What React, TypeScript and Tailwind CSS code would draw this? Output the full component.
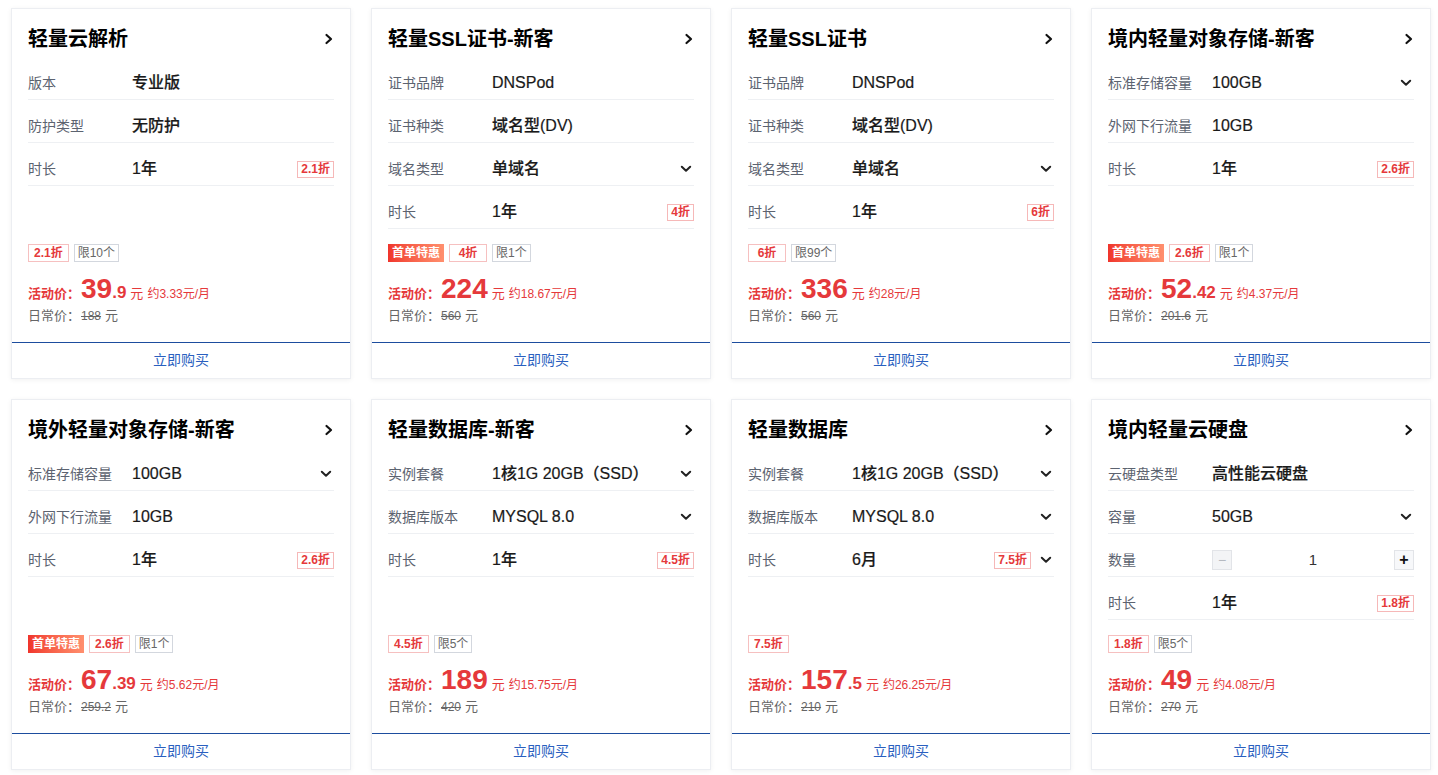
type Row = {
  label: string
  value?: string
  discount?: string
  select?: boolean
  stepper?: boolean
}

type Product = {
  title: string
  rows: Row[]
  firstOrder?: boolean
  tags: string[]
  limit?: string
  price: string
  decimal?: string
  monthly: string
  regular: string
}

const products: Product[] = [
  {
    title: '轻量云解析',
    rows: [
      { label: '版本', value: '专业版' },
      { label: '防护类型', value: '无防护' },
      { label: '时长', value: '1年', discount: '2.1折' },
    ],
    tags: ['2.1折'],
    limit: '限10个',
    price: '39',
    decimal: '.9',
    monthly: '约3.33元/月',
    regular: '188',
  },
  {
    title: '轻量SSL证书-新客',
    rows: [
      { label: '证书品牌', value: 'DNSPod' },
      { label: '证书种类', value: '域名型(DV)' },
      { label: '域名类型', value: '单域名', select: true },
      { label: '时长', value: '1年', discount: '4折' },
    ],
    firstOrder: true,
    tags: ['4折'],
    limit: '限1个',
    price: '224',
    monthly: '约18.67元/月',
    regular: '560',
  },
  {
    title: '轻量SSL证书',
    rows: [
      { label: '证书品牌', value: 'DNSPod' },
      { label: '证书种类', value: '域名型(DV)' },
      { label: '域名类型', value: '单域名', select: true },
      { label: '时长', value: '1年', discount: '6折' },
    ],
    tags: ['6折'],
    limit: '限99个',
    price: '336',
    monthly: '约28元/月',
    regular: '560',
  },
  {
    title: '境内轻量对象存储-新客',
    rows: [
      { label: '标准存储容量', value: '100GB', select: true },
      { label: '外网下行流量', value: '10GB' },
      { label: '时长', value: '1年', discount: '2.6折' },
    ],
    firstOrder: true,
    tags: ['2.6折'],
    limit: '限1个',
    price: '52',
    decimal: '.42',
    monthly: '约4.37元/月',
    regular: '201.6',
  },
  {
    title: '境外轻量对象存储-新客',
    rows: [
      { label: '标准存储容量', value: '100GB', select: true },
      { label: '外网下行流量', value: '10GB' },
      { label: '时长', value: '1年', discount: '2.6折' },
    ],
    firstOrder: true,
    tags: ['2.6折'],
    limit: '限1个',
    price: '67',
    decimal: '.39',
    monthly: '约5.62元/月',
    regular: '259.2',
  },
  {
    title: '轻量数据库-新客',
    rows: [
      { label: '实例套餐', value: '1核1G 20GB（SSD）', select: true },
      { label: '数据库版本', value: 'MYSQL 8.0', select: true },
      { label: '时长', value: '1年', discount: '4.5折' },
    ],
    tags: ['4.5折'],
    limit: '限5个',
    price: '189',
    monthly: '约15.75元/月',
    regular: '420',
  },
  {
    title: '轻量数据库',
    rows: [
      { label: '实例套餐', value: '1核1G 20GB（SSD）', select: true },
      { label: '数据库版本', value: 'MYSQL 8.0', select: true },
      { label: '时长', value: '6月', discount: '7.5折', select: true },
    ],
    tags: ['7.5折'],
    price: '157',
    decimal: '.5',
    monthly: '约26.25元/月',
    regular: '210',
  },
  {
    title: '境内轻量云硬盘',
    rows: [
      { label: '云硬盘类型', value: '高性能云硬盘' },
      { label: '容量', value: '50GB', select: true },
      { label: '数量', stepper: true },
      { label: '时长', value: '1年', discount: '1.8折' },
    ],
    tags: ['1.8折'],
    limit: '限5个',
    price: '49',
    monthly: '约4.08元/月',
    regular: '270',
  },
]

function ArrowRight() {
  return (
    <svg width="10" height="12" viewBox="0 0 10 12" fill="none" className="shrink-0">
      <path d="M2.5 2 L7 6 L2.5 10" stroke="#111" strokeWidth="2.2" strokeLinecap="round" strokeLinejoin="round" />
    </svg>
  )
}

function ArrowDown() {
  return (
    <svg width="12" height="8" viewBox="0 0 12 8" fill="none" className="shrink-0 mr-[2px]">
      <path d="M1.8 1.8 L6 5.8 L10.2 1.8" stroke="#222" strokeWidth="2" strokeLinecap="round" strokeLinejoin="round" />
    </svg>
  )
}

function Stepper() {
  return (
    <div className="flex flex-1 items-center justify-between">
      <span className="flex h-[20px] w-[20px] items-center justify-center border border-[#e2e4e8] bg-[#f3f4f6] text-[14px] leading-none text-[#b5b9c0]">
        −
      </span>
      <span className="text-[15px] text-[#333]">1</span>
      <span className="flex h-[20px] w-[20px] items-center justify-center border border-[#e2e4e8] bg-[#f7f8fa] text-[16px] font-bold leading-none text-[#111]">
        +
      </span>
    </div>
  )
}

function SpecRow({ row }: { row: Row }) {
  return (
    <div className="flex h-[43px] items-center border-b border-[#eef0f3] pt-[15px] pb-[5px]">
      <span className="w-[104px] shrink-0 text-[14px] leading-[22px] text-[#5c6370]">{row.label}</span>
      {row.stepper ? (
        <Stepper />
      ) : (
        <>
          <span className="flex-1 text-[16px] font-medium leading-[22px] text-[#1a1a1a] [-webkit-text-stroke:0.2px_#1a1a1a]">
            {row.value}
          </span>
          {row.discount && (
            <span className="border border-[#f6b8b8] px-[3px] text-[12px] font-bold leading-[15px] text-[#e5393b]">
              {row.discount}
            </span>
          )}
          {row.select && (
            <span className={row.discount ? 'ml-[9px]' : ''}>
              <ArrowDown />
            </span>
          )}
        </>
      )}
    </div>
  )
}

function ProductCard({ product }: { product: Product }) {
  return (
    <div className="flex h-[371px] flex-col border border-[#eceef2] bg-white shadow-[0_1px_5px_rgba(0,0,0,0.06)]">
      <div className="px-4">
        <div className="mt-[17px] mb-[5px] flex h-[26px] items-center justify-between">
          <h2 className="text-[20px] font-bold leading-[26px] text-black">{product.title}</h2>
          <ArrowRight />
        </div>
        {product.rows.map((row) => (
          <SpecRow key={row.label} row={row} />
        ))}
      </div>

      <div className="flex-1" />

      <div className="px-4 pb-[17px]">
        <div className="flex h-[18px] items-center gap-[5px]">
          {product.firstOrder && (
            <span className="flex h-[18px] items-center bg-gradient-to-r from-[#f0342c] to-[#ff8f6e] px-[4px] text-[12px] font-bold text-white">
              首单特惠
            </span>
          )}
          {product.tags.map((tag) => (
            <span
              key={tag}
              className="flex h-[18px] min-w-[38px] items-center justify-center border border-[#f6c0c0] px-[5px] text-[12px] font-bold text-[#e5393b]"
            >
              {tag}
            </span>
          ))}
          {product.limit && (
            <span className="flex h-[18px] items-center border border-[#d3d7de] px-[3px] text-[12px] text-[#666]">
              {product.limit}
            </span>
          )}
        </div>
        <div className="mt-[9px] flex h-[36px] items-baseline leading-[36px] text-[#e5393b]">
          <span className="text-[13px] font-bold">活动价：</span>
          <span className="ml-[1px] text-[28px] font-bold">{product.price}</span>
          {product.decimal && <span className="text-[17px] font-bold">{product.decimal}</span>}
          <span className="ml-[4px] text-[13px]">元</span>
          <span className="ml-[4px] text-[12px]">{product.monthly}</span>
        </div>
        <div className="flex h-[18px] items-baseline leading-[18px] text-[#666]">
          <span className="text-[13px]">日常价：</span>
          <span className="ml-[1px] text-[12px] line-through">{product.regular}</span>
          <span className="ml-[4px] text-[13px]">元</span>
        </div>
      </div>

      <button className="h-[36px] border-t border-[#1d4d9e] text-[14px] text-[#2a5fbf]">立即购买</button>
    </div>
  )
}

export default function App() {
  return (
    <div
      className="min-h-screen bg-white pl-[11px] pt-2"
      style={{ fontFamily: '"Liberation Sans", "Noto Sans CJK SC", sans-serif' }}
    >
      <div className="grid grid-cols-[repeat(4,340px)] gap-x-5 gap-y-5">
        {products.map((product) => (
          <ProductCard key={product.title} product={product} />
        ))}
      </div>
    </div>
  )
}
